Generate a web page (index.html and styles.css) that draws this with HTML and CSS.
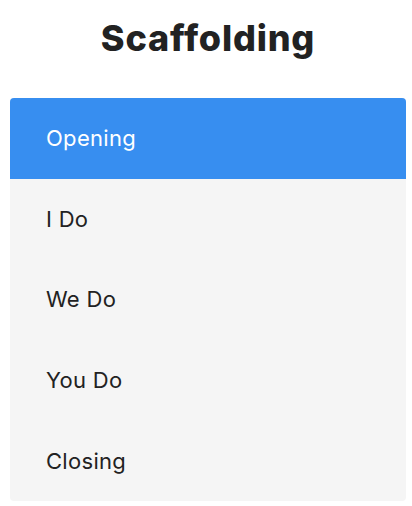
FILE: index.html
```html
<!DOCTYPE html>
<html lang="en">
<head>
<meta charset="utf-8">
<title>Scaffolding</title>
<link rel="stylesheet" href="styles.css">
</head>
<body>
<main class="page">
  <h1 class="title">Scaffolding</h1>
  <ul class="steps">
    <li class="step step-active">Opening</li>
    <li class="step">I Do</li>
    <li class="step">We Do</li>
    <li class="step">You Do</li>
    <li class="step">Closing</li>
  </ul>
</main>
</body>
</html>
```

FILE: styles.css
```css
html, body {
  margin: 0;
  padding: 0;
  background: #ffffff;
}
body {
  font-family: "Inter", "Lato", "Liberation Sans", sans-serif;
  color: #222222;
}
.page {
  padding: 0 6px 0 10px;
}
.title {
  margin: 0;
  padding-top: 16px;
  height: 98px;
  box-sizing: border-box;
  text-align: center;
  font-size: 36px;
  font-weight: 800;
  line-height: 44px;
  color: #222222;
  letter-spacing: 0.8px;
}
.steps {
  list-style: none;
  margin: 0;
  padding: 0;
  background: #f5f5f5;
  border-radius: 4px;
  overflow: hidden;
}
.step {
  display: flex;
  align-items: center;
  height: 80.6px;
  padding: 0 36px;
  font-size: 22px;
  font-weight: 400;
  letter-spacing: 0.3px;
  color: #222222;
}
.step-active {
  background: #378ef0;
  color: #ffffff;
}
```
